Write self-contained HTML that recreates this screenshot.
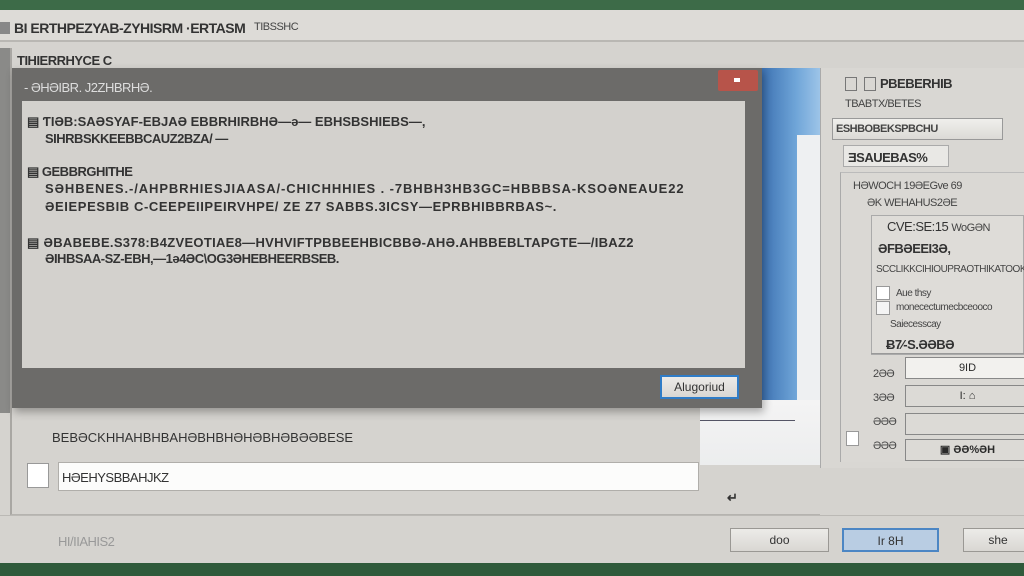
<!DOCTYPE html>
<html><head><meta charset="utf-8"><style>
*{margin:0;padding:0;box-sizing:border-box}
body{width:1024px;height:576px;overflow:hidden;background:#d5d3cf;font-family:"Liberation Sans",sans-serif;color:#2a2a2a;position:relative}
.a{position:absolute}
.t{position:absolute;font-size:13px;white-space:nowrap;letter-spacing:-0.5px;font-weight:bold;color:#333}
.s{font-size:11px;font-weight:normal;color:#444}
.btn{position:absolute;background:linear-gradient(#ecebe8,#d9d7d3);border:1px solid #9a9894;font-size:12px;text-align:center;color:#333}
</style></head><body>
<div class="a" style="left:0;top:0;width:1024px;height:10px;background:#3d6b48"></div>
<div class="a" style="left:0;top:563px;width:1024px;height:13px;background:#2f5a3b"></div>
<div class="a" style="left:0;top:10px;width:1024px;height:32px;background:#dddbd7;border-bottom:2px solid #b9b7b3"></div>
<div class="a" style="left:0;top:22px;width:10px;height:12px;background:#888"></div>
<div class="t" style="left:14px;top:20px;font-size:14px">BI ERTHPEZYAB-ZYHISRM ·ERTASM</div>
<div class="t s" style="left:254px;top:21px">TIBSSHC</div>
<div class="a" style="left:0;top:48px;width:10px;height:365px;background:#8a8a88"></div>
<div class="a" style="left:10px;top:48px;width:810px;height:467px;border-left:2px solid #a9a7a3;border-bottom:1px solid #b5b3af"></div>
<div class="t" style="left:17px;top:53px">TIHIERRHYCE C</div>
<div class="a" style="left:760px;top:68px;width:60px;height:340px;background:linear-gradient(90deg,#3a6fb0,#6fa5d8 60%,#9dc4e8)"></div>
<div class="a" style="left:797px;top:135px;width:23px;height:330px;background:#eef0f2"></div>
<div class="a" style="left:700px;top:400px;width:120px;height:65px;background:linear-gradient(#f4f4f4,#ecedee)"></div>
<div class="a" style="left:700px;top:420px;width:95px;height:2px;border-top:1px solid #556"></div>
<div class="a" style="left:12px;top:68px;width:750px;height:340px;background:#6c6b69;box-shadow:2px 4px 8px rgba(0,0,0,.3)"></div>
<div class="t" style="left:24px;top:80px;color:#ddd;font-weight:normal">- ƏHƏIBR. J2ZHBRHƏ.</div>
<div class="a" style="left:718px;top:70px;width:40px;height:21px;background:#b7544a;border-radius:2px"></div>
<div class="a" style="left:734px;top:78px;width:6px;height:4px;background:#fff"></div>
<div class="a" style="left:22px;top:101px;width:723px;height:267px;background:#d3d1cd"></div>
<div class="t" style="left:27px;top:114px;letter-spacing:0">▤ ƬIƏB:SAƏSYAF-EBJAƏ EBBRHIRBHƏ—ə— EBHSBSHIEBS—,</div>
<div class="t" style="left:45px;top:131px">SIHRBSKKEEBBCAUZ2BZA/ —</div>
<div class="t" style="left:27px;top:164px">▤ GEBBRGHITHE</div>
<div class="t" style="left:45px;top:181px;letter-spacing:0.9px">SƏHBENES.-/AHPBRHIESJIAASA/-CHICHHHIES . -7BHBH3HB3GC=HBBBSA-KSOƏNEAUE22</div>
<div class="t" style="left:45px;top:199px;letter-spacing:0.6px">ƏEIEPESBIB C-CEEPEIIPEIRVHPE/ ZE Z7 SABBS.3ICSY—EPRBHIBBRBAS~.</div>
<div class="t" style="left:27px;top:235px;letter-spacing:0.3px">▤ ƏBABEBE.S378:B4ZVEOTIAE8—HVHVIFTPBBEEHBICBBƏ-AHƏ.AHBBEBLTAPGTE—/IBAZ2</div>
<div class="t" style="left:45px;top:251px">ƏIHBSAA-SZ-EBH,—1ə4ƏC\OG3ƏHEBHEERBSEB.</div>
<div class="btn" style="left:660px;top:375px;width:79px;height:24px;border:2px solid #2f7cc7;line-height:20px">Alugoriud</div>
<div class="t" style="left:52px;top:430px;font-weight:normal;letter-spacing:0">BEBƏCKHHAHBHBAHƏBHBHƏHƏBHƏBƏƏBESE</div>
<div class="a" style="left:27px;top:463px;width:22px;height:25px;background:#fff;border:1px solid #999"></div>
<div class="a" style="left:58px;top:462px;width:641px;height:29px;background:#fcfcfb;border:1px solid #b0aeaa"></div>
<div class="t" style="left:62px;top:470px;font-weight:normal">HƏEHYSBBAHJKZ</div>
<div class="t" style="left:727px;top:490px">↵</div>
<div class="a" style="left:0;top:515px;width:1024px;height:1px;background:#bbb9b5"></div>
<div class="t s" style="left:58px;top:534px;color:#999;font-size:13px">HI/IIAHIS2</div>
<div class="btn" style="left:730px;top:528px;width:99px;height:24px;line-height:22px">doo</div>
<div class="btn" style="left:842px;top:528px;width:97px;height:24px;line-height:22px;background:#b9cde3;border:2px solid #4c86c4">Ir 8H</div>
<div class="btn" style="left:963px;top:528px;width:70px;height:24px;line-height:22px">she</div>
<div class="a" style="left:820px;top:68px;width:204px;height:400px;background:#d9d7d3;border-left:1px solid #aaa"></div>
<div class="a" style="left:845px;top:77px;width:12px;height:14px;border:1px solid #777"></div>
<div class="a" style="left:864px;top:77px;width:12px;height:14px;border:1px solid #777"></div>
<div class="t" style="left:880px;top:76px">PBEBERHIB</div>
<div class="t s" style="left:845px;top:98px">TBABTX/BETES</div>
<div class="a" style="left:832px;top:118px;width:171px;height:22px;background:linear-gradient(#f0efec,#dcdad6);border:1px solid #999"></div>
<div class="t s" style="left:836px;top:123px;font-weight:bold">ESHBOBEKSPBCHU</div>
<div class="a" style="left:843px;top:145px;width:106px;height:22px;background:#e9e8e5;border:1px solid #aaa"></div>
<div class="t" style="left:848px;top:150px">ƎSAUEBAS%</div>
<div class="a" style="left:840px;top:172px;width:184px;height:290px;border-left:1px solid #aaa;border-top:1px solid #bbb;background:#dad8d4"></div>
<div class="t s" style="left:853px;top:180px">HƏWOCH 19ƏEGve 69</div>
<div class="t s" style="left:867px;top:197px">ƏK WEHAHUS2ƏE</div>
<div class="a" style="left:871px;top:215px;width:153px;height:140px;border:1px solid #aaa;background:#dedcd8"></div>
<div class="t" style="left:887px;top:219px;font-weight:normal">CVE:SE:15 <span class="s">WoGƏN</span></div>
<div class="t" style="left:878px;top:241px">ƏFBƏEEI3Ə,</div>
<div class="t s" style="left:876px;top:264px;font-size:10px">SCCLIKKCIHIOUPRAOTHIKATOOKCH</div>
<div class="a" style="left:876px;top:286px;width:14px;height:14px;background:#fff;border:1px solid #999"></div>
<div class="a" style="left:876px;top:301px;width:14px;height:14px;background:#f4f4f4;border:1px solid #999"></div>
<div class="t s" style="left:896px;top:288px;font-size:10px">Aue thsy</div>
<div class="t s" style="left:896px;top:302px;font-size:10px">monecectumecbceooco</div>
<div class="t s" style="left:890px;top:319px;font-size:10px">Saiecesscay</div>
<div class="t" style="left:886px;top:337px">Ƀ7⁄-S.ƏƏBƏ</div>
<div class="a" style="left:871px;top:353px;width:153px;height:1px;background:#999"></div>
<div class="t s" style="left:873px;top:368px">2ƏƏ</div><div class="t s" style="left:873px;top:392px">3ƏƏ</div>
<div class="t s" style="left:873px;top:416px">ƏƏƏ</div><div class="t s" style="left:873px;top:440px">ƏƏƏ</div>
<div class="a" style="left:905px;top:357px;width:125px;height:22px;background:#f2f1ee;border:1px solid #888;font-size:11px;text-align:center;line-height:20px">9ID</div>
<div class="a" style="left:905px;top:385px;width:125px;height:22px;background:#dcdad6;border:1px solid #888;font-size:11px;text-align:center;line-height:20px">I: ⌂</div>
<div class="a" style="left:905px;top:413px;width:125px;height:22px;background:#dcdad6;border:1px solid #888"></div>
<div class="a" style="left:905px;top:439px;width:125px;height:22px;background:#dcdad6;border:1px solid #888;font-size:11px;font-weight:bold;text-align:center;line-height:20px">▣ ƏƏ%ƏH</div>
<div class="a" style="left:846px;top:431px;width:13px;height:15px;background:#fff;border:1px solid #999"></div>
</body></html>
